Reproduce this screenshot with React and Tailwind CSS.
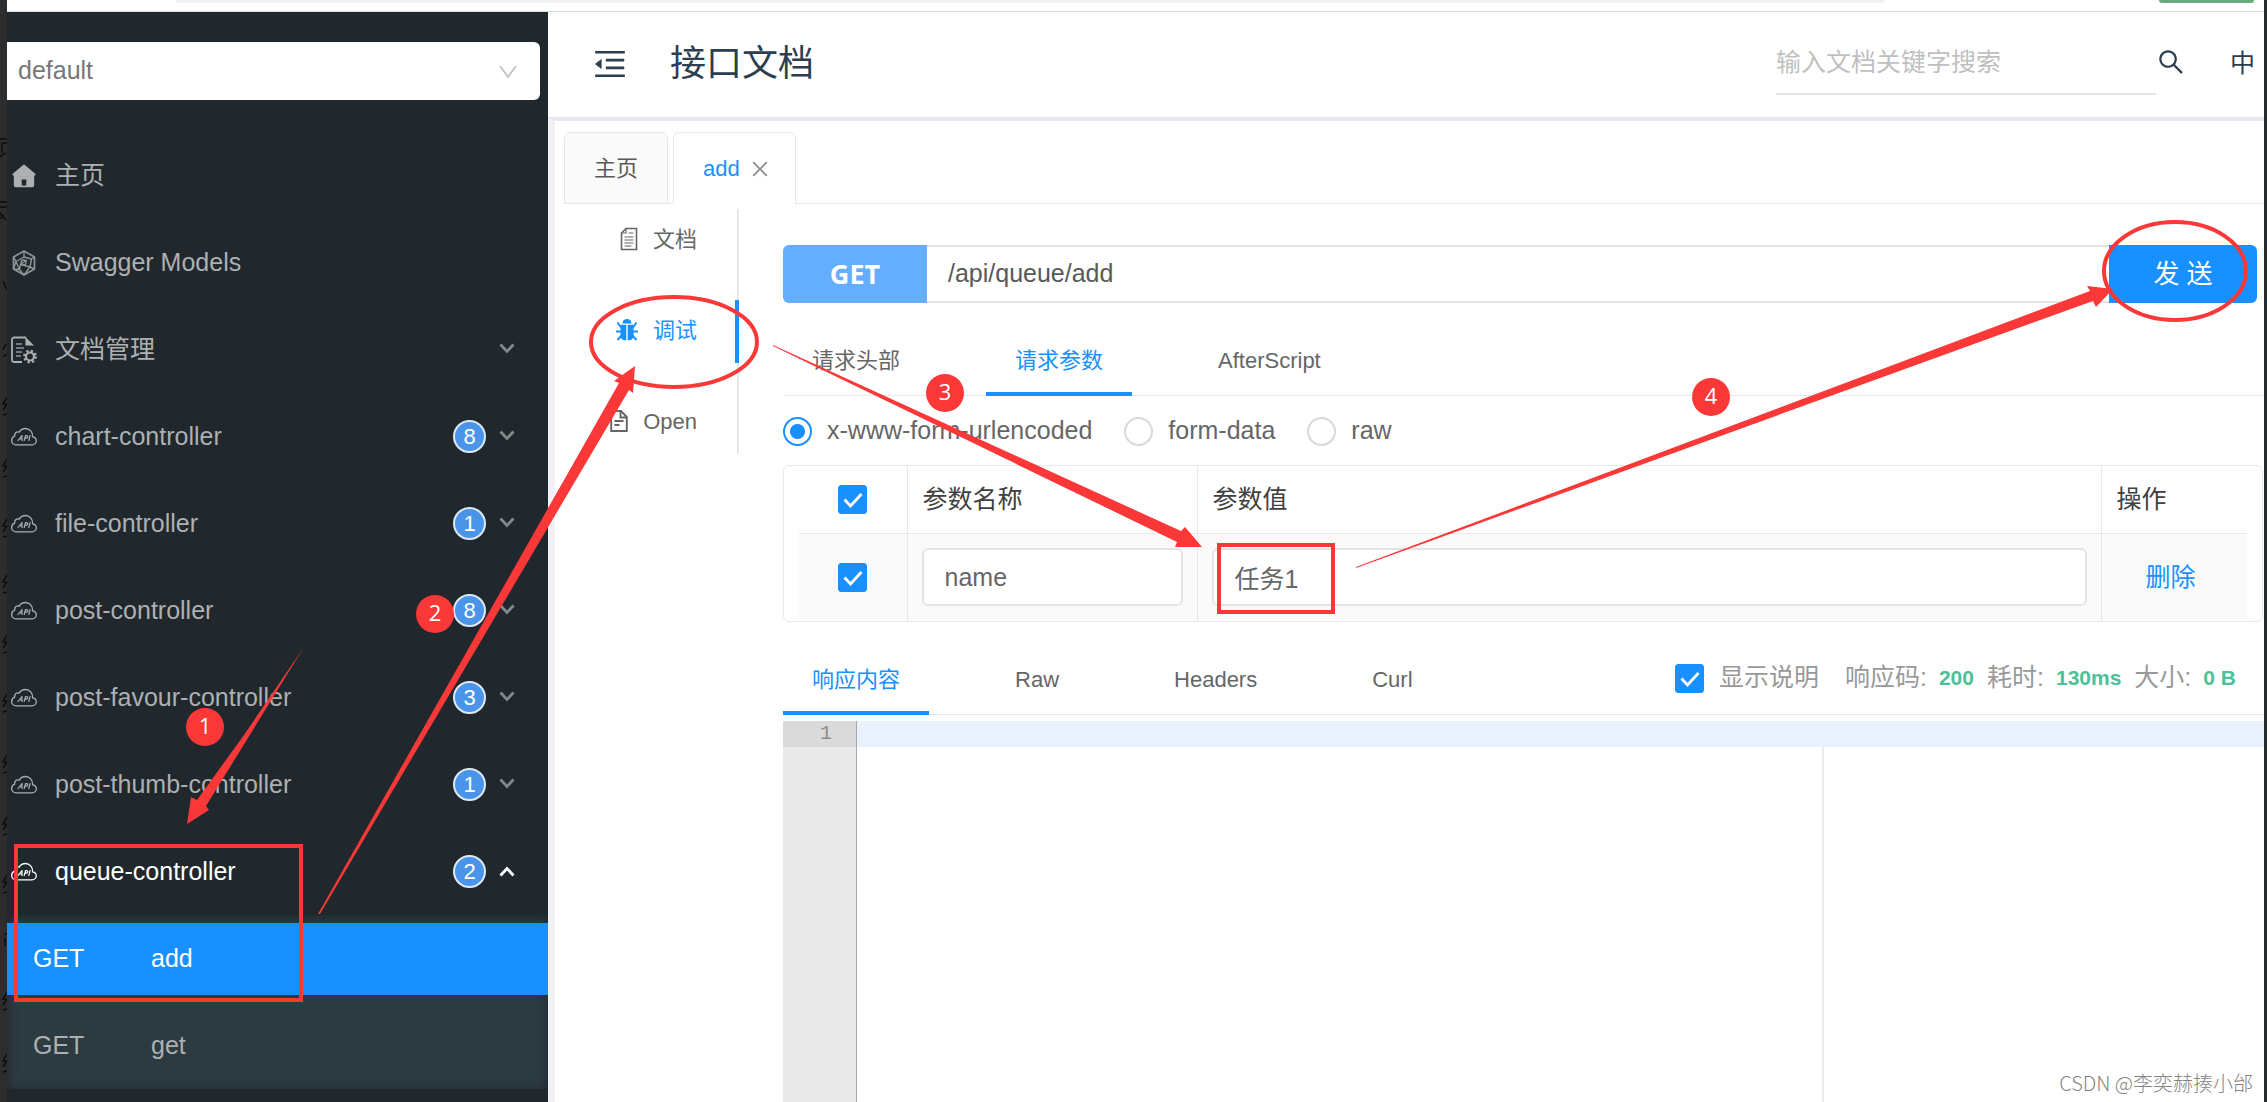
import React from "react";
import {
  AiOutlineMenuFold,
  AiOutlineSearch,
  AiOutlineClose,
  AiOutlineDown,
} from "react-icons/ai";

function HomeIcon() {
  return (
    <svg viewBox="0 0 26 26" className="w-[26px] h-[26px] shrink-0" fill="currentColor">
      <path
        fillRule="evenodd"
        d="M12.2 1.9a1.3 1.3 0 0 1 1.600 0L24.300 10.800c.8.9.4 1.700-.5 1.700h-.6V22.200a2 2 0 0 1-2 2H4.800a2 2 0 0 1-2-2v-9.700h-.6c-.9 0-1.300-.8-.5-1.700ZM10.700 22.400h4.600v-6h-4.600Z"
      />
    </svg>
  );
}

function ModelsIcon() {
  return (
    <svg
      viewBox="0 0 26 28"
      className="w-[26px] h-[28px] shrink-0 opacity-80"
      fill="none"
      stroke="currentColor"
      strokeWidth="1.700"
      strokeLinejoin="round"
    >
      <path d="M13 2 23.500 8v12L13 26 2.500 20V8Z" />
      <path
        d="M13 2v6L5 12.500 2.500 8M5 12.500l-2.500 7.500M13 8l7.500 2 3-2M20.500 10l-1.500 8 4.500 2M19 18l-6 8M5 12.500l3.500 8L13 26M8.500 20.500l-6-.5M8.500 20.500l1-5 9.500 2.500M9.500 15.500 16 11"
        strokeWidth="1.400"
      />
      <circle cx="12.500" cy="13.500" r="2.500" strokeWidth="1.300" />
    </svg>
  );
}

function DocSettingsIcon() {
  return (
    <svg viewBox="0 0 26 28" className="w-[26px] h-[28px] shrink-0" fill="none" stroke="currentColor" strokeWidth="1.800">
      <path d="M11 26H3a2 2 0 0 1-2-2V3.500a2 2 0 0 1 2-2h12" />
      <path d="M14.500 1v8.500H23Z" fill="currentColor" stroke="none" />
      <path d="M5 8h6M5 12h8M5 16h6M5 20h5" strokeWidth="1.400" opacity="0.800" />
      <circle cx="19" cy="20.500" r="4" strokeWidth="2.200" />
      <circle cx="19" cy="20.500" r="5.800" strokeWidth="2.200" strokeDasharray="2.280 2.280" />
    </svg>
  );
}

function CloudApiIcon() {
  return (
    <svg
      viewBox="0 0 26 20"
      className="w-[26px] h-[20px] shrink-0"
      fill="none"
      stroke="currentColor"
      strokeWidth="1.300"
      strokeLinecap="round"
      strokeLinejoin="round"
    >
      <path d="M5 17.800h16c2.400 0 4.300-1.800 4.300-4 0-2-1.500-3.600-3.700-4C22 5 18.500 1.500 14.500 1.500c-2.800 0-5 1.300-6.300 3.600C5.200 4.300 3.300 6.200 3.700 9.200 1.800 9.900.7 11.500.7 13.400c0 2.500 1.900 4.400 4.300 4.400Z" />
      <path d="m7 13.500 4-5v5M8.500 12H11M13.200 13.500l1.400-5c2.600-.3 3.200 2.500-.6 2.800M17.800 13.500l1.300-5" strokeWidth="1.200" />
    </svg>
  );
}

function PageIcon() {
  return (
    <svg viewBox="0 0 18 24" className="w-[18px] h-[24px] shrink-0" fill="none" stroke="currentColor" strokeWidth="1.600">
      <path d="M6 1.500h10.500v21H1.500V6Z" />
      <path d="M6 1.500V6H1.500M8.500 6h5M4.500 10h9M4.500 13h9M4.500 16h9M4.500 19h7" strokeWidth="1.200" />
    </svg>
  );
}

function BugIcon() {
  return (
    <svg viewBox="0 0 22 24" className="w-[22px] h-[24px] shrink-0" fill="currentColor">
      <path d="M6.500 5.500a4.500 4.500 0 0 1 9 0Z" />
      <path d="M4.500 6.800h5.800v15.400H8.200c-2.200 0-3.700-2-3.700-4.700ZM11.700 6.800h5.800v10.700c0 2.700-1.500 4.700-3.700 4.700h-2.100Z" />
      <path
        d="M5 9.500 1.500 4.500M5 13.500H0M5.500 17.500 1.500 22M17 9.500l3.500-5M17 13.500h5M16.500 17.500l4 4.500"
        fill="none"
        stroke="currentColor"
        strokeWidth="2"
      />
    </svg>
  );
}

function OpenFileIcon() {
  return (
    <svg viewBox="0 0 18 24" className="w-[18px] h-[24px] shrink-0" fill="none" stroke="currentColor" strokeWidth="1.900">
      <path d="M1.200 2h9.800l5.800 6v14H1.200ZM10.500 2v6.500h6.300M4.500 12h9M4.500 16h5" />
    </svg>
  );
}

function Chevron({ up }) {
  return (
    <svg
      viewBox="0 0 16 12"
      className={`mb-px w-[16px] h-[12px] shrink-0 ${up ? "" : "text-[#84888b]"}`}
      fill="none"
      stroke="currentColor"
      strokeWidth="2.800"
    >
      <path d={up ? "M1.500 10.500 8 3.500l6.500 7" : "M1.500 1.500 8 8.500l6.500-7"} />
    </svg>
  );
}

const menu = [
  { label: "主页", Icon: HomeIcon },
  { label: "Swagger Models", Icon: ModelsIcon },
  { label: "文档管理", Icon: DocSettingsIcon, expandable: true },
  { label: "chart-controller", Icon: CloudApiIcon, count: 8, expandable: true },
  { label: "file-controller", Icon: CloudApiIcon, count: 1, expandable: true },
  { label: "post-controller", Icon: CloudApiIcon, count: 8, expandable: true },
  { label: "post-favour-controller", Icon: CloudApiIcon, count: 3, expandable: true },
  { label: "post-thumb-controller", Icon: CloudApiIcon, count: 1, expandable: true },
  { label: "queue-controller", Icon: CloudApiIcon, count: 2, expandable: true, open: true },
];

function MenuItem({ label, Icon, count, expandable, open }) {
  return (
    <button
      type="button"
      aria-expanded={expandable ? !!open : undefined}
      className={`flex h-[87px] w-full items-center pl-1 pr-[33px] text-left ${open ? "text-white" : "text-[#adb0b2]"}`}
    >
      <Icon />
      <span className="ml-[18px] flex-1">{label}</span>
      {count && (
        <span className="mr-[13px] flex size-[33px] items-center justify-center rounded-full border-2 border-[#dfe9f5] bg-[#4a95ea] text-[22px] leading-none text-white">
          {count}
        </span>
      )}
      {expandable && <Chevron up={open} />}
    </button>
  );
}

function Sidebar() {
  return (
    <aside className="flex w-[541px] shrink-0 flex-col bg-[#20282d]">
      <div className="relative mt-[30px] mr-2 mb-8 text-[#777]">
        <select
          aria-label="分组"
          className="h-[58px] w-full appearance-none rounded-r-md bg-white pl-[11px] pr-12 text-[25px]"
        >
          <option>default</option>
        </select>
        <AiOutlineDown className="pointer-events-none absolute top-[18px] right-[20px] size-6 text-[#c4c4c4]" />
      </div>
      <nav className="flex flex-col">
        {menu.map((item) => (
          <MenuItem key={item.label} {...item} />
        ))}
        <div className="flex flex-col bg-[#2c3a41] pt-2 pb-[7px] shadow-[inset_0_2px_12px_rgba(0,0,0,0.35)]">
          <a href="#add" className="flex h-[72px] items-center bg-[#1890ff] pl-[26px] text-white">
            <span className="w-[118px]">GET</span>
            <span>add</span>
          </a>
          <a href="#get" className="mt-[15px] flex h-[72px] items-center pl-[26px] text-[#adb0b2]">
            <span className="w-[118px]">GET</span>
            <span>get</span>
          </a>
        </div>
      </nav>
    </aside>
  );
}

function Header() {
  return (
    <header className="flex h-[105px] shrink-0 items-center pl-[43px] pr-[9px] pb-[2px] text-[#2c3e50]">
      <button type="button" aria-label="收起菜单">
        <AiOutlineMenuFold className="size-[38px]" />
      </button>
      <h1 className="ml-[41px] flex-1 text-[36px]">接口文档</h1>
      <input
        aria-label="搜索"
        placeholder="输入文档关键字搜索"
        className="h-[62px] w-[380px] border-b-2 border-[#e4e4e4] text-[25px] outline-none placeholder:text-[#bfbfbf]"
      />
      <button type="button" aria-label="搜索文档" className="mb-1">
        <AiOutlineSearch className="size-[30px]" />
      </button>
      <button type="button" className="ml-[44px] text-[25px]">
        中
      </button>
    </header>
  );
}

function PageTabs() {
  return (
    <div className="flex shrink-0 pt-[11px] text-[22px]">
      <span className="w-[9px] border-b border-transparent" />
      <button
        type="button"
        className="h-[72px] w-[104px] rounded-t-md border border-[#e8e8e8] bg-[#fafafa] text-[#595959]"
      >
        主页
      </button>
      <span className="w-[5px] border-b border-[#e8e8e8]" />
      <div className="flex h-[72px] items-center gap-[9px] rounded-t-md border border-b-0 border-[#e8e8e8] pr-[24px] pl-[29px] text-[#1890ff]">
        <button type="button">add</button>
        <button type="button" aria-label="关闭 add">
          <AiOutlineClose className="size-[22px] text-[#8c8c8c]" />
        </button>
      </div>
      <span className="flex-1 border-b border-[#e8e8e8]" />
    </div>
  );
}

const sideTabs = [
  { label: "文档", Icon: PageIcon },
  { label: "调试", Icon: BugIcon, active: true },
  { label: "Open", Icon: OpenFileIcon },
];

function SideTabs() {
  return (
    <div className="mt-[5px] flex h-[245px] w-[184px] shrink-0 flex-col gap-7 border-r-2 border-[#e8e8e8] text-[22px]">
      {sideTabs.map(({ label, Icon, active }) => (
        <button
          key={label}
          type="button"
          className={`-mr-[2px] flex h-[63px] items-center justify-end gap-[15px] border-r-4 pr-[38px] pb-[3px] ${
            active ? "border-[#1890ff] text-[#1890ff]" : "border-transparent text-[#666]"
          }`}
        >
          <Icon />
          <span>{label}</span>
        </button>
      ))}
    </div>
  );
}

function Tabs({ items, active, children }) {
  return (
    <div className="flex items-stretch border-b border-[#e8e8e8] text-[22px]">
      <div className="-mb-px flex gap-[57px]">
        {items.map((t) => (
          <button
            key={t}
            type="button"
            className={`h-[73px] border-b-4 px-[29px] pt-[5px] ${
              t === active ? "border-[#1890ff] text-[#1890ff]" : "border-transparent text-[#666]"
            }`}
          >
            {t}
          </button>
        ))}
      </div>
      {children}
    </div>
  );
}

function Radio({ label, checked }) {
  return (
    <label className="flex items-center gap-[15px]">
      <input
        type="radio"
        name="content-type"
        defaultChecked={checked}
        className="size-[29px] appearance-none rounded-full border-2 border-[#d9d9d9] bg-white checked:border-[#1890ff] checked:bg-[radial-gradient(circle,#1890ff_0,#1890ff_7px,#fff_8px)]"
      />
      <span>{label}</span>
    </label>
  );
}

function Check({ label }) {
  return (
    <span className="relative inline-flex size-[29px] shrink-0">
      <input
        type="checkbox"
        id={label}
        aria-label={label}
        defaultChecked
        className="size-[29px] appearance-none rounded-[3px] border border-[#d9d9d9] checked:border-[#1890ff] checked:bg-[#1890ff]"
      />
      <svg
        viewBox="0 0 29 29"
        className="pointer-events-none absolute inset-0 size-[29px]"
        fill="none"
        stroke="#fff"
        strokeWidth="2.800"
      >
        <path d="m6.500 14.500 6 6.500L23.500 9" />
      </svg>
    </span>
  );
}

function ParamsTable() {
  return (
    <div className="mt-4 mr-px rounded-md border border-[#e8e8e8] px-[15px]">
      <table className="w-full table-fixed border-collapse text-left text-[25px] text-[#595959]">
        <thead className="text-[#404040]">
          <tr className="h-[67px] border-b border-[#e8e8e8]">
            <th className="w-[108px] border-r border-[#e8e8e8] text-center">
              <span className="flex justify-center">
                <Check label="全选" />
              </span>
            </th>
            <th className="w-[290px] border-r border-[#e8e8e8] px-[15px] font-normal">参数名称</th>
            <th className="border-r border-[#e8e8e8] px-[15px] font-normal">参数值</th>
            <th className="w-[146px] px-[15px] font-normal">操作</th>
          </tr>
        </thead>
        <tbody>
          <tr className="h-[88px] bg-[#fafafa]">
            <td className="border-r border-[#e8e8e8]">
              <span className="flex justify-center">
                <Check label="选择 name" />
              </span>
            </td>
            <td className="border-r border-[#e8e8e8] px-[14px]">
              <input
                aria-label="参数名称"
                defaultValue="name"
                className="h-[58px] w-full rounded-md border-2 border-[#e4e4e4] bg-white px-[21px] text-[#666]"
              />
            </td>
            <td className="border-r border-[#e8e8e8] px-[14px]">
              <input
                aria-label="参数值"
                defaultValue="任务1"
                className="h-[58px] w-full rounded-md border-2 border-[#e4e4e4] bg-white px-[21px] text-[#666]"
              />
            </td>
            <td className="pl-[44px]">
              <button type="button" className="text-[#1890ff]">
                删除
              </button>
            </td>
          </tr>
        </tbody>
      </table>
    </div>
  );
}

function Stat({ name, value }) {
  return (
    <span className="flex items-center gap-3">
      <span>{name}:</span>
      <span className="text-[21px] font-bold text-[#4cc197]">{value}</span>
    </span>
  );
}

function Debugger() {
  return (
    <section className="flex min-w-0 flex-1 flex-col pl-[44px]">
      <form className="mt-[41px] mr-[7px] flex h-[58px] text-[25px]">
        <span className="flex w-[144px] items-center justify-center rounded-l-md bg-[#64adff] font-['Open_Sans'] text-[27px] font-bold text-white">
          GET
        </span>
        <input
          aria-label="接口地址"
          defaultValue="/api/queue/add"
          className="min-w-0 flex-1 border-y-2 border-[#e4e4e4] px-[21px] text-[#595959]"
        />
        <button type="button" className="w-[148px] rounded-r-md bg-[#1890ff] text-[26px] text-white">
          发 送
        </button>
      </form>
      <div className="mt-5">
        <Tabs items={["请求头部", "请求参数", "AfterScript"]} active="请求参数" />
      </div>
      <div className="mt-[17px] flex h-[36px] items-center gap-8 text-[25px] text-[#666]">
        <Radio label="x-www-form-urlencoded" checked />
        <Radio label="form-data" />
        <Radio label="raw" />
      </div>
      <ParamsTable />
      <div className="mt-5">
        <Tabs items={["响应内容", "Raw", "Headers", "Curl"]} active="响应内容">
          <div className="ml-auto flex items-center gap-[13px] pr-[28px] text-[25px] text-[#999]">
            <label htmlFor="显示说明" className="mr-[13px] flex items-center gap-[15px]">
              <Check label="显示说明" />
              <span>显示说明</span>
            </label>
            <Stat name="响应码" value="200" />
            <Stat name="耗时" value="130ms" />
            <Stat name="大小" value="0 B" />
          </div>
        </Tabs>
      </div>
      <div className="mt-[6px] flex flex-1">
        <div className="w-[74px] shrink-0 border-r border-[#a8a8a8] bg-[#e9e9e9]">
          <div className="h-[26px] bg-[#dadada] pr-6 text-right font-['Liberation_Mono'] text-[20px] leading-[26px] text-[#8c8c8c]">
            1
          </div>
        </div>
        <div className="flex min-w-0 flex-1 flex-col">
          <div className="h-[26px] bg-[#e8f1fd]" />
          <div className="w-[967px] flex-1 border-r-2 border-[#ebebeb]" />
        </div>
      </div>
    </section>
  );
}

const steps = [
  { n: 1, x: 205, y: 727 },
  { n: 2, x: 435, y: 614 },
  { n: 3, x: 945, y: 393 },
  { n: 4, x: 1711, y: 397 },
];

function Annotations() {
  return (
    <svg className="pointer-events-none absolute inset-0 h-full w-full" fill="none" stroke="#fb3838" strokeWidth="4">
      <rect x="16" y="846" width="285" height="154" />
      <rect x="1219" y="545" width="114" height="67" />
      <ellipse cx="674" cy="342" rx="83" ry="45" />
      <ellipse cx="2175" cy="271" rx="71" ry="49" />
      <g fill="#fb3838" stroke="none">
        <path d="M304 647 206 806l3 4-22 14 4-27 6 3 47-65Z" />
        <path d="M318 914 619 383l-5-2 21-15-2 27-4-3L320 914Z" />
        <path d="m773 345 408 186 4-4 17 20h-27l2-5L773 346Z" />
        <path d="m1356 567 734-276-3-5 26 3-17 18-3-6-737 267Z" />
      </g>
      {steps.map(({ n, x, y }) => (
        <g key={n} stroke="none">
          <circle cx={x} cy={y} r="19" fill="#fb3838" />
          <text x={x} y={y + 7} textAnchor="middle" fill="#fff" className="font-['Open_Sans'] text-[22px]">
            {n}
          </text>
        </g>
      ))}
    </svg>
  );
}

const edgeMarks = [405, 467, 527, 583, 643, 702, 763, 825, 883, 1000, 1062];

function WindowEdge() {
  return (
    <div className="w-[7px] shrink-0 bg-[#2d2d2d]">
      <svg className="h-full w-[7px]" fill="none" stroke="#0c0c0c" strokeWidth="1.500">
        <path d="M0 139h7M2 143v10M2 143h5M0 157l6-4M0 202h7M0 207h7M0 213l6 7M0 219l4-4M3 281l4 9M6 344l-3 6M3 357l4-3M4 934h3M5 938v8" />
        {edgeMarks.map((y) => (
          <path key={y} d={`M7 ${y - 8}l-4 7h4l-4 6M3 ${y + 10}l4-1`} />
        ))}
      </svg>
    </div>
  );
}

export default function App() {
  return (
    <div className="relative flex min-h-screen flex-col overflow-hidden bg-white font-['Liberation_Sans','Noto_Sans_CJK_SC',sans-serif] text-[25px]">
      <div className="flex flex-1">
        <WindowEdge />
        <div className="flex min-w-0 flex-1 flex-col">
          <div className="flex h-[12px] shrink-0 items-start justify-between border-b border-[#dcdcdc] pr-[10px] pl-[168px]">
            <span className="h-[3px] w-[1710px] rounded-b-full bg-[#f1f3f4]" />
            <span className="h-[3px] w-[95px] rounded-b-full bg-[#6aa97c]" />
          </div>
          <div className="flex flex-1">
            <Sidebar />
            <main className="flex min-w-0 flex-1 flex-col">
              <Header />
              <div className="flex flex-1 flex-col border-t-4 border-l-[7px] border-t-[#e7e9ee] border-l-[#f0f1f5]">
                <PageTabs />
                <div className="flex flex-1">
                  <SideTabs />
                  <Debugger />
                </div>
              </div>
            </main>
          </div>
        </div>
        <div className="w-[3px] shrink-0 bg-[#252b2c]" />
      </div>
      <Annotations />
      <p className="absolute right-[14px] bottom-[5px] font-['Noto_Sans_CJK_SC',sans-serif] text-[20px] font-light leading-7 text-[#858585]">
        CSDN @李奕赫揍小邰
      </p>
    </div>
  );
}
